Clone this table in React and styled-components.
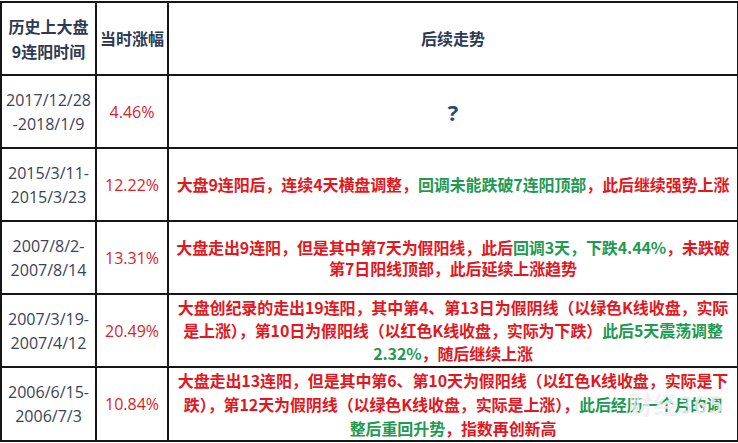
import React from "react";
import styled, { createGlobalStyle } from "styled-components";

const Global = createGlobalStyle`
  html, body { margin: 0; padding: 0; background: #ffffff; }
  body { font-family: "Open Sans", "Noto Sans CJK SC", sans-serif; }
`;

const Page = styled.div`
  width: 738px;
  height: 443px;
  overflow: hidden;
  position: relative;
  background: #ffffff;
`;

const Table = styled.table`
  border-collapse: collapse;
  table-layout: fixed;
  width: 737px;
  margin: 1px 0 0 0;
`;

const Cell = styled.td`
  border: 2px solid #161616;
  height: ${(p) => p.$h || 69}px;
  padding: 0;
  text-align: center;
  vertical-align: middle;
  box-sizing: border-box;
`;

const Head = styled.div`
  font-family: "Noto Sans CJK SC", sans-serif;
  font-weight: 700;
  font-size: 16px;
  line-height: 25px;
  color: #2e3a52;
`;

const DateText = styled.div`
  font-family: "Open Sans", "Noto Sans CJK SC", sans-serif;
  font-size: 16px;
  line-height: 24px;
  color: #3a4258;
`;

const Pct = styled.div`
  font-family: "Open Sans", sans-serif;
  font-size: 16px;
  color: #d8232a;
`;

const Question = styled.div`
  font-family: "Open Sans", sans-serif;
  font-weight: 700;
  font-size: 22px;
  color: #234a7a;
`;

const Desc = styled.div`
  font-family: "Noto Sans CJK SC", sans-serif;
  font-weight: 700;
  font-size: 16px;
  line-height: ${(p) => p.$lh || 23}px;
  color: #e3171d;
  white-space: nowrap;
  letter-spacing: -0.1px;
`;

const G = styled.span`
  color: #1f9a52;
`;

const Watermark = styled.div`
  position: absolute;
  right: 14px;
  bottom: 22px;
  font-family: "Noto Sans CJK SC", sans-serif;
  font-weight: 700;
  font-size: 24px;
  color: rgba(235, 238, 242, 0.85);
  letter-spacing: 1px;
  pointer-events: none;
`;

const rows = [
  {
    date: ["2017/12/28", "-2018/1/9"],
    pct: "4.46%",
    desc: <Question>?</Question>,
  },
  {
    date: ["2015/3/11-", "2015/3/23"],
    pct: "12.22%",
    desc: (
      <Desc>
        大盘9连阳后，连续4天横盘调整，<G>回调未能跌破7连阳顶部</G>，此后继续强势上涨
      </Desc>
    ),
  },
  {
    date: ["2007/8/2-", "2007/8/14"],
    pct: "13.31%",
    desc: (
      <Desc $lh={21}>
        大盘走出9连阳，但是其中第7天为假阳线，此后<G>回调3天，下跌4.44%</G>，未跌破
        <br />
        第7日阳线顶部，此后延续上涨趋势
      </Desc>
    ),
  },
  {
    date: ["2007/3/19-", "2007/4/12"],
    pct: "20.49%",
    desc: (
      <Desc>
        大盘创纪录的走出19连阳，其中第4、第13日为假阴线（以绿色K线收盘，实际
        <br />
        是上涨），第10日为假阳线（以红色K线收盘，实际为下跌）<G>此后5天震荡调整</G>
        <br />
        <G>2.32%</G>，随后继续上涨
      </Desc>
    ),
  },
  {
    date: ["2006/6/15-", "2006/7/3"],
    pct: "10.84%",
    desc: (
      <Desc $lh={24}>
        大盘走出13连阳，但是其中第6、第10天为假阳线（以红色K线收盘，实际是下
        <br />
        跌），第12天为假阴线（以绿色K线收盘，实际是上涨），<G>此后经历一个月的调</G>
        <br />
        <G>整后重回升势</G>，指数再创新高
      </Desc>
    ),
  },
];

export default function App() {
  return (
    <Page>
      <Global />
      <Table>
        <colgroup>
          <col style={{ width: "95px" }} />
          <col style={{ width: "72px" }} />
          <col style={{ width: "570px" }} />
        </colgroup>
        <tbody>
          <tr>
            <Cell $h={73}>
              <Head>
                历史上大盘
                <br />
                9连阳时间
              </Head>
            </Cell>
            <Cell $h={73}>
              <Head>当时涨幅</Head>
            </Cell>
            <Cell $h={73}>
              <Head>后续走势</Head>
            </Cell>
          </tr>
          {rows.map((r, i) => (
            <tr key={i}>
              <Cell $h={i === rows.length - 1 ? 72 : 73}>
                <DateText>
                  {r.date[0]}
                  <br />
                  {r.date[1]}
                </DateText>
              </Cell>
              <Cell $h={i === rows.length - 1 ? 72 : 73}>
                <Pct>{r.pct}</Pct>
              </Cell>
              <Cell $h={i === rows.length - 1 ? 72 : 73}>{r.desc}</Cell>
            </tr>
          ))}
        </tbody>
      </Table>
      <Watermark>财经365</Watermark>
    </Page>
  );
}
